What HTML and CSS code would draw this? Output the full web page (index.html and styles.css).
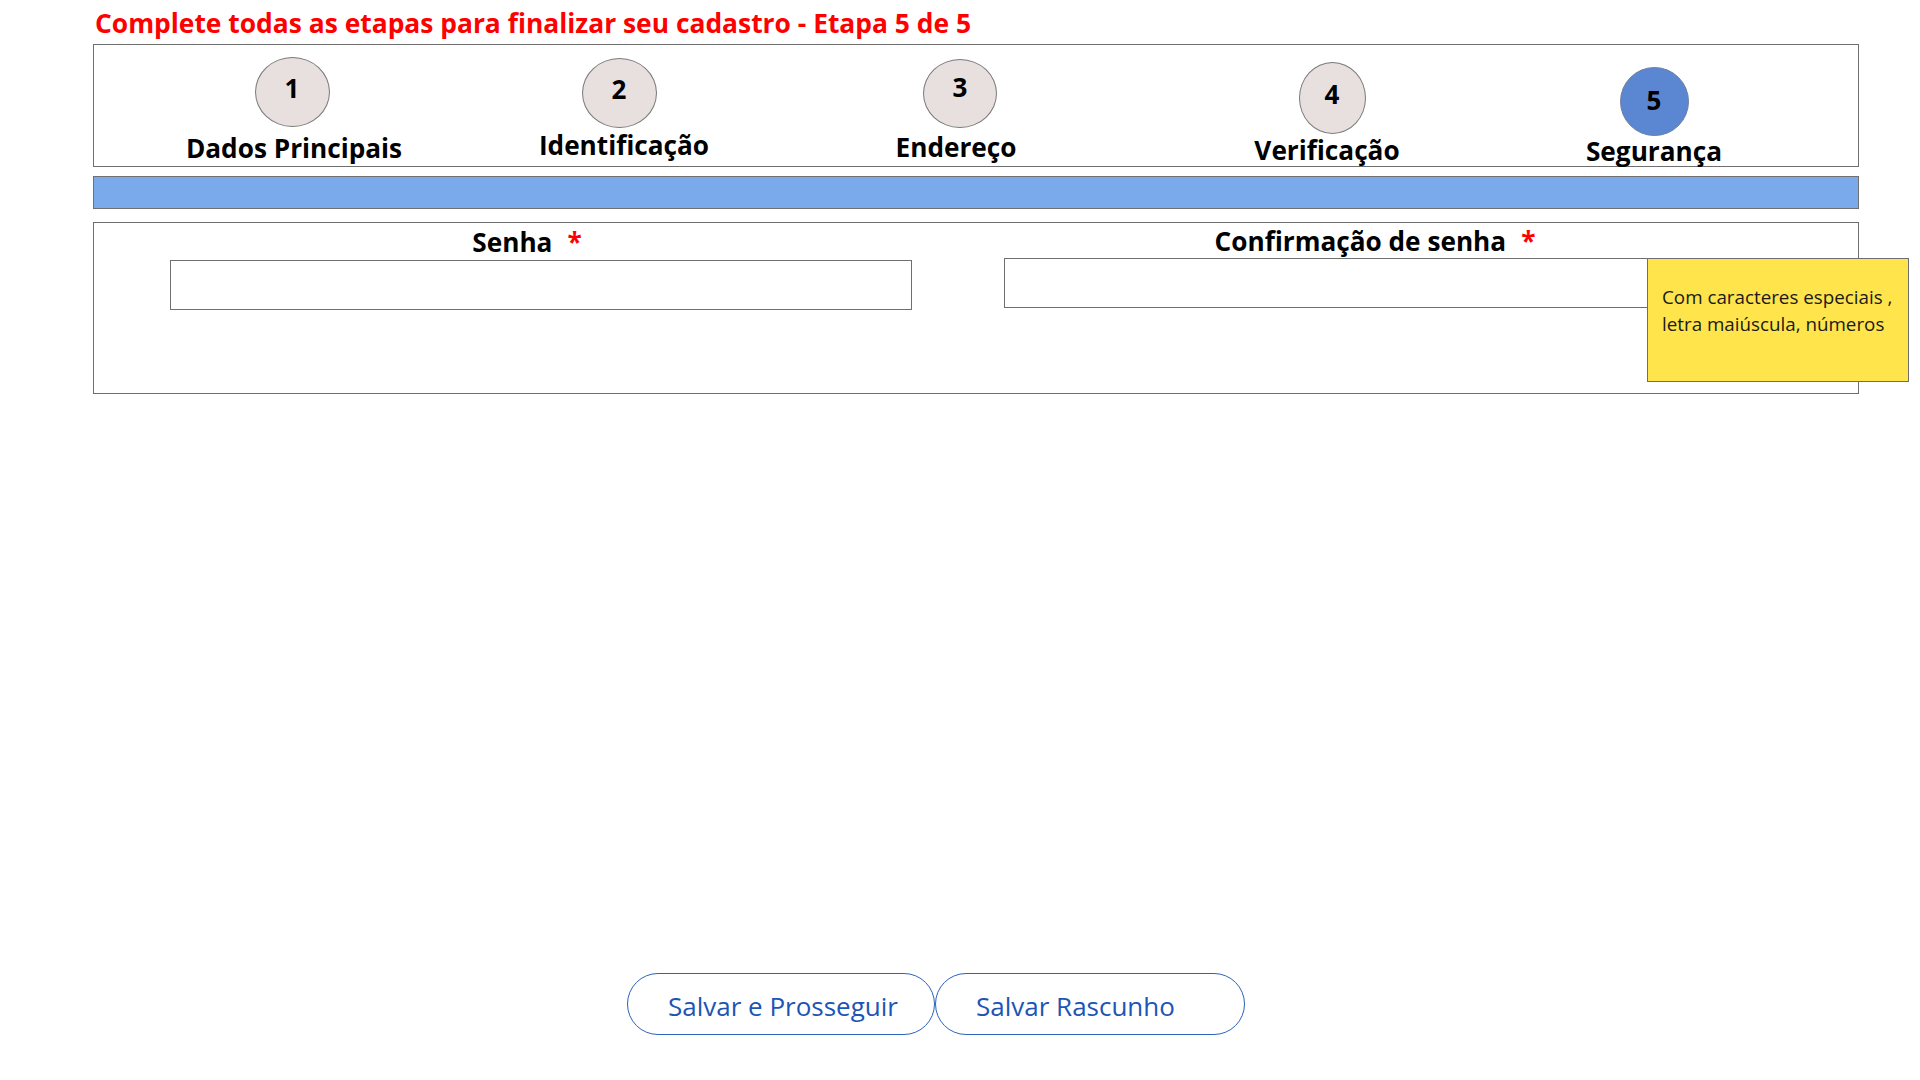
FILE: index.html
```html
<!DOCTYPE html>
<html lang="pt-BR">
<head>
<meta charset="utf-8">
<title>Cadastro - Etapa 5 de 5</title>
<link rel="stylesheet" href="styles.css">
</head>
<body>
<div class="page">
  <h1 class="title">Complete todas as etapas para finalizar seu cadastro - Etapa 5 de 5</h1>

  <div class="stepper">
    <div class="step step-1">
      <div class="circle">1</div>
      <div class="step-label">Dados Principais</div>
    </div>
    <div class="step step-2">
      <div class="circle">2</div>
      <div class="step-label">Identificação</div>
    </div>
    <div class="step step-3">
      <div class="circle">3</div>
      <div class="step-label">Endereço</div>
    </div>
    <div class="step step-4">
      <div class="circle">4</div>
      <div class="step-label">Verificação</div>
    </div>
    <div class="step step-5 is-active">
      <div class="circle">5</div>
      <div class="step-label">Segurança</div>
    </div>
  </div>

  <div class="progress"></div>

  <div class="form-box">
    <div class="field field-a">
      <label class="field-label" for="senha">Senha<span class="req">*</span></label>
      <input class="field-input" id="senha" type="password">
    </div>
    <div class="field field-b">
      <label class="field-label" for="confirma">Confirmação de senha<span class="req">*</span></label>
      <input class="field-input" id="confirma" type="password">
    </div>
    <div class="tooltip">Com caracteres especiais ,<br>letra maiúscula, números</div>
  </div>

  <div class="actions">
    <button class="btn btn-primary" type="button">Salvar e Prosseguir</button>
    <button class="btn btn-secondary" type="button">Salvar Rascunho</button>
  </div>
</div>
</body>
</html>
```

FILE: styles.css
```css
* { box-sizing: border-box; }

html, body {
  margin: 0;
  padding: 0;
  background: #ffffff;
}

body {
  font-family: "Open Sans", "Noto Sans", sans-serif;
  color: #000;
}

.page {
  padding: 6px 61px 0 93px;
}

.title {
  margin: 0 0 4px 2px;
  font-size: 26.4px;
  line-height: 34px;
  font-weight: 700;
  color: #ff0000;
  white-space: nowrap;
}

/* ---------- stepper ---------- */
.stepper {
  height: 123px;
  border: 1px solid #6f6f6f;
  display: grid;
  grid-template-columns: 324px 330px 352px 392px 252px;
  padding-left: 36px;
  align-items: start;
}

.step {
  display: flex;
  flex-direction: column;
  align-items: center;
}

.circle {
  display: flex;
  align-items: center;
  justify-content: center;
  border: 1px solid #7a7a7a;
  border-radius: 50%;
  background: #e8dfdf;
  font-size: 26px;
  font-weight: 700;
  line-height: 1;
  color: #000;
}

.step-label {
  font-size: 26.2px;
  font-weight: 700;
  line-height: 30px;
  white-space: nowrap;
}

.step-1 .circle { width: 75px; height: 70px; margin-top: 12px; padding-bottom: 9px; }
.step-1 .step-label { margin-top: 6px; padding-left: 4px; }

.step-2 .circle { width: 75px; height: 70px; margin-top: 13px; padding-bottom: 9px; }
.step-2 .step-label { margin-top: 2px; padding-left: 10px; }

.step-3 .circle { width: 74px; height: 69px; margin-top: 14px; padding-bottom: 14px; }
.step-3 .step-label { margin-top: 4px; padding-right: 8px; }

.step-4 .circle { width: 67px; height: 72px; margin-top: 17px; padding-bottom: 9px; }
.step-4 .step-label { margin-top: 1px; padding-right: 10px; }

.step-5 .circle { width: 69px; height: 69px; margin-top: 22px; padding-bottom: 3px; }
.step-5 .step-label { margin-top: 0; }

.is-active .circle {
  background: #5b87d2;
  border-color: #6b7ea0;
}

/* ---------- progress bar ---------- */
.progress {
  margin-top: 9px;
  height: 33px;
  border: 1px solid #6f6f6f;
  background: #7aaaeb;
}

/* ---------- form ---------- */
.form-box {
  position: relative;
  margin-top: 13px;
  height: 172px;
  border: 1px solid #6f6f6f;
  display: grid;
  grid-template-columns: 742px 742px;
  column-gap: 92px;
  padding-left: 76px;
  align-items: start;
}

.field {
  display: flex;
  flex-direction: column;
}

.field-label {
  display: block;
  text-align: center;
  font-size: 26.2px;
  font-weight: 700;
  line-height: 30px;
  white-space: nowrap;
}

.req {
  color: #ff0000;
  margin-left: 15px;
}

.field-input {
  display: block;
  width: 100%;
  height: 50px;
  border: 1px solid #6f6f6f;
  border-radius: 0;
  background: #fff;
  font-family: inherit;
  font-size: 20px;
  padding: 0 10px;
  outline: none;
}

.field-a .field-label { padding-top: 4px; padding-right: 28px; }
.field-a .field-input { margin-top: 3px; }

.field-b .field-label { padding-top: 3px; }
.field-b .field-input { margin-top: 2px; }

.tooltip {
  position: absolute;
  left: 1553px;
  top: 35px;
  width: 262px;
  height: 124px;
  background: #ffe44c;
  border: 1px solid #6f6f6f;
  padding: 25px 6px 0 14px;
  font-size: 18.8px;
  line-height: 27px;
  color: #1a1a1a;
  white-space: nowrap;
}

/* ---------- actions ---------- */
.actions {
  display: flex;
  margin-top: 579px;
  padding-left: 534px;
}

.btn {
  height: 62px;
  width: 308px;
  border: 1px solid #2b62be;
  border-radius: 31px;
  background: #fff;
  color: #1c55b4;
  font-family: inherit;
  font-size: 26px;
  font-weight: 400;
  text-align: left;
  padding: 3px 0 0 40px;
  cursor: pointer;
  white-space: nowrap;
}

.btn-secondary {
  width: 310px;
}
```
